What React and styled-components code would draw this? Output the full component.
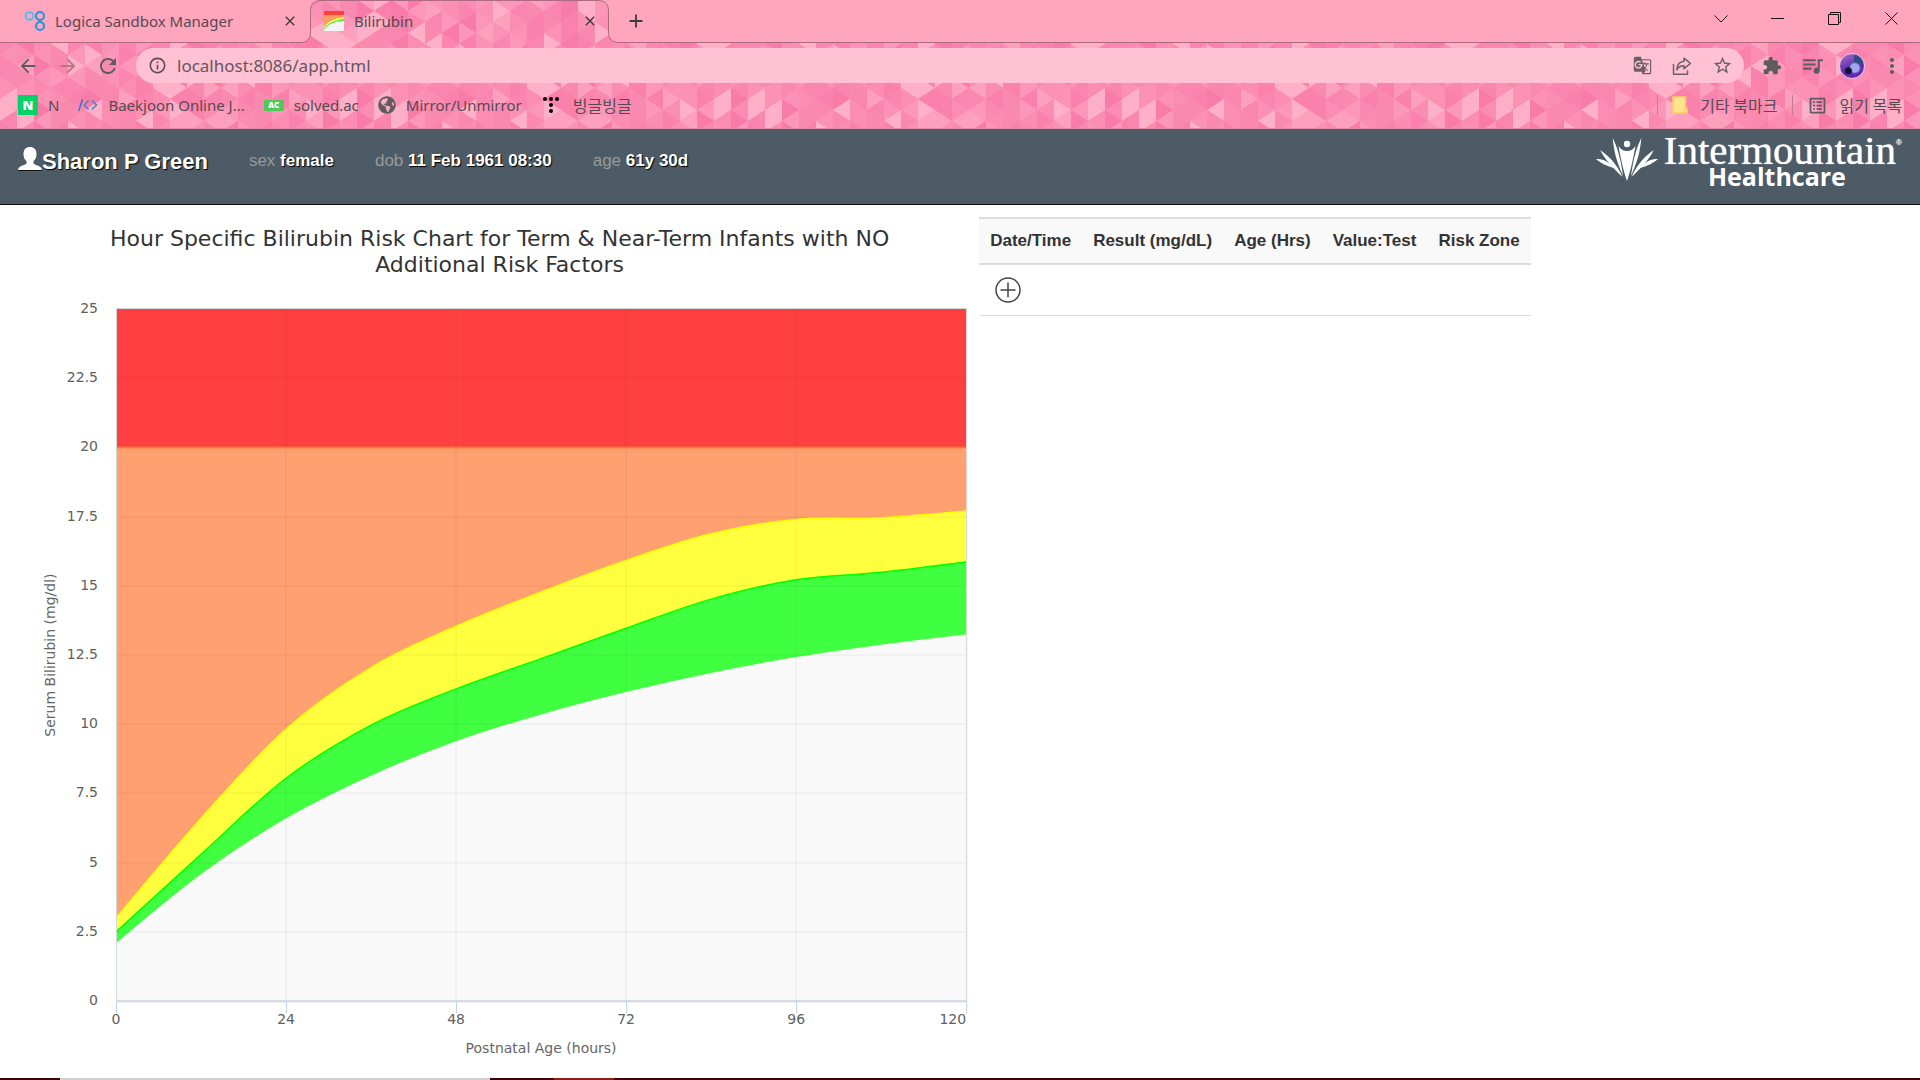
import React from "react";
import styled, { createGlobalStyle } from "styled-components";
import { FaGlobeAmericas } from "react-icons/fa";
import {
  MdAdd,
  MdArrowBack,
  MdArrowForward,
  MdClose,
  MdExtension,
  MdGTranslate,
  MdInfoOutline,
  MdListAlt,
  MdMoreVert,
  MdQueueMusic,
  MdRefresh,
  MdStarBorder,
} from "react-icons/md";

/* ---------- theme pattern ---------- */

const TILE_W = 374;
const TILE_H = 132;
const COL = 17;
const HALF = 11;

function buildTriangles() {
  const shades = ["#f97ba8", "#fa81ac", "#fa85ae", "#fa89b0", "#fb8db3", "#fb92b6", "#fc97b9", "#fca0bd", "#fdb0c7"];
  let seed = 41;
  const next = () => {
    seed = (seed * 1103515245 + 12345) % 2147483648;
    return seed / 2147483648;
  };
  const out = [];
  for (let c = 0; c < TILE_W / COL; c += 1) {
    for (let r = -1; r < TILE_H / HALF + 1; r += 1) {
      const x = c * COL;
      const y = r * HALF;
      const right = (c + r) % 2 === 0;
      const points = right
        ? `${x},${y - HALF} ${x + COL},${y} ${x},${y + HALF}`
        : `${x + COL},${y - HALF} ${x},${y} ${x + COL},${y + HALF}`;
      out.push({ points, fill: shades[Math.floor(next() * shades.length)] });
    }
  }
  return out;
}

const TRIANGLES = buildTriangles();
const TILE_SVG =
  `<svg xmlns="http://www.w3.org/2000/svg" width="${TILE_W}" height="${TILE_H}">` +
  `<rect width="${TILE_W}" height="${TILE_H}" fill="#fb8db3"/>` +
  TRIANGLES.map((t) => `<polygon points="${t.points}" fill="${t.fill}"/>`).join("") +
  `</svg>`;
const TILE_URL = `url("data:image/svg+xml,${encodeURIComponent(TILE_SVG)}")`;

/* ---------- base ---------- */

const UI_FONT = `"Noto Sans", "Noto Sans CJK KR", sans-serif`;
const KOREAN_FONT = `"Noto Sans CJK KR", sans-serif`;
const PAGE_FONT = `"Liberation Sans", Arial, sans-serif`;
const CHART_FONT = `"DejaVu Sans", sans-serif`;

const GlobalStyle = createGlobalStyle`
  * { box-sizing: border-box; }
  body { margin: 0; background: #fff; font-family: ${PAGE_FONT}; }
  button { padding: 0; border: 0; background: none; font: inherit; color: inherit; }
`;

const Screen = styled.div`
  display: flex;
  flex-direction: column;
  min-height: 100vh;
`;

/* ---------- browser ---------- */

const Chrome = styled.header`
  background: ${TILE_URL};
  border-bottom: 1px solid #e58aa8;
  font-family: ${UI_FONT};
  font-size: 15px;
  line-height: 20px;
  color: #574a51;
`;

const TabStrip = styled.div`
  display: flex;
  height: 43px;
  background: #ffa5be;
  border-bottom: 1px solid #ad6a80;
`;

const Tab = styled.div`
  position: relative;
  display: flex;
  align-items: center;
  width: ${(p) => (p.$first ? 310 : 300)}px;
  padding: 0 12px 0 ${(p) => (p.$first ? 25 : 14)}px;
`;

const TabLabel = styled.button`
  position: relative;
  display: flex;
  flex: 1;
  align-items: center;
  gap: 10px;
  height: 42px;
  white-space: nowrap;
`;

const TabShape = styled.svg`
  position: absolute;
  left: -10px;
  top: 0;
`;

const IconButton = styled.button`
  position: relative;
  display: flex;
  align-items: center;
  justify-content: center;
  width: ${(p) => p.$size || 40}px;
  height: ${(p) => p.$size || 35}px;
  color: ${(p) => p.$tone || "#5f5c60"};
`;

const NewTab = styled(IconButton)`
  margin-left: 6px;
  height: 42px;
`;

const WindowControls = styled.div`
  display: flex;
  margin-left: auto;
`;

const WindowButton = styled.button`
  display: flex;
  align-items: center;
  justify-content: center;
  width: 57px;
  height: 37px;
  color: #1c1015;
`;

const Toolbar = styled.div`
  display: flex;
  align-items: center;
  padding: 5px 8px;
`;

const AddressBar = styled.label`
  display: flex;
  flex: 1;
  align-items: center;
  gap: 10px;
  height: 35px;
  margin: 0 8px;
  padding: 0 2px 0 12px;
  border-radius: 18px;
  background: #ffc1d3;
  color: #5a4d53;
`;

const AddressInput = styled.input`
  flex: 1;
  border: 0;
  padding: 0;
  outline: 0;
  background: none;
  font: 17px ${UI_FONT};
  color: #65565d;
`;

const AddressTools = styled.span`
  display: flex;
`;

const Avatar = styled.span`
  width: 26px;
  height: 26px;
  border: 1px solid #efc4f3;
  border-radius: 50%;
  background:
    radial-gradient(circle at 35% 70%, #14103c 0 3px, transparent 4px),
    radial-gradient(circle at 62% 58%, #9fa8ea 0 4px, transparent 6px),
    linear-gradient(90deg, transparent 60%, #2f4a86 60%) top / 100% 40% no-repeat,
    linear-gradient(160deg, #b06bd0, #5a2fa8 55%, #6a22b8);
`;

const Bookmarks = styled.nav`
  display: flex;
  align-items: center;
  gap: 19px;
  height: 40px;
  padding: 0 18px 6px;
`;

const Bookmark = styled.a`
  display: flex;
  align-items: center;
  gap: 10px;
  color: inherit;
  text-decoration: none;
  white-space: nowrap;
`;

const KoreanBookmark = styled(Bookmark)`
  gap: 12px;
  font: 16px/20px ${KOREAN_FONT};
`;

const BookmarkEnd = styled.div`
  display: flex;
  align-items: center;
  gap: 14px;
  margin-left: auto;
`;

const Divider = styled.span`
  width: 1px;
  height: 20px;
  background: #c77a94;
`;

const SiteBadge = styled.span`
  display: flex;
  align-items: center;
  justify-content: center;
  width: 20px;
  height: ${(p) => p.$height}px;
  border-radius: ${(p) => p.$radius}px;
  background: ${(p) => p.$fill};
  color: #fff;
  font-weight: 900;
  font-size: ${(p) => p.$text}px;
  line-height: 1;
`;

/* ---------- patient banner ---------- */

const Banner = styled.section`
  display: flex;
  align-items: flex-start;
  justify-content: space-between;
  height: 76px;
  padding: 0 18px;
  border-bottom: 1px solid #0b0d0f;
  background: #4d5b66;
  color: #fff;
`;

const Patient = styled.div`
  display: flex;
  align-items: flex-start;
  gap: 41px;
  padding-top: 18px;
  font-size: 17px;
  line-height: 28px;
`;

const PatientName = styled.h1`
  display: flex;
  align-items: flex-start;
  margin: 0;
  font-size: 22px;
  line-height: 30px;
  text-shadow: 1px 1px 1px #000;
`;

const Fact = styled.span`
  color: #999;
`;

const FactValue = styled.b`
  color: #fff;
  text-shadow: 1px 1px 1px #000;
`;

const Logo = styled.div`
  display: flex;
  align-items: flex-start;
  gap: 6px;
  padding-top: 6px;
`;

const LogoText = styled.div`
  display: flex;
  flex-direction: column;
  align-items: center;
`;

const LogoName = styled.span`
  display: flex;
  font: 41px/30px "Liberation Serif", serif;
  text-shadow: 0 0 1px #fff;
`;

const LogoMark = styled.sup`
  font: 8px/16px "Liberation Sans", sans-serif;
`;

const LogoSub = styled.span`
  padding-right: 12px;
  font: 700 25px/22px "Open Sans", sans-serif;
`;

/* ---------- content ---------- */

const Content = styled.main`
  display: flex;
  flex: 1;
  align-items: flex-start;
`;

const ChartPanel = styled.section`
  width: 51%;
  padding-top: 21px;
`;

const ChartTitle = styled.h2`
  margin: 0;
  padding: 0 0 12px 20px;
  font: 400 22px/26px ${CHART_FONT};
  color: #333;
  text-align: center;
`;

const ChartSvg = styled.svg`
  display: block;
  width: 100%;
  font-family: ${CHART_FONT};
  font-size: 14px;
`;

const Results = styled.table`
  margin-top: 12px;
  border-collapse: collapse;
  color: #333;
  font-size: 17px;
`;

const HeadCell = styled.th`
  height: 46px;
  padding: 0 11px;
  border-top: 2px solid #ddd;
  border-bottom: 2px solid #ddd;
  background: #f9f9f9;
  white-space: nowrap;
  text-align: left;
`;

const BodyCell = styled.td`
  height: 51px;
  padding: 0 9px;
  border-bottom: 1px solid #ddd;
`;

/* ---------- taskbar edge ---------- */

const Taskbar = styled.footer`
  display: flex;
  height: 2px;
  padding-left: 60px;
  background: #3d0306;
`;

const TaskSegment = styled.span`
  width: ${(p) => p.$width}px;
  margin-right: 64px;
  background: ${(p) => p.$fill};
`;

/* ---------- drawings ---------- */

function LogicaIcon() {
  return (
    <svg width="20" height="20" viewBox="0 0 20 20" fill="none" strokeWidth="2">
      <circle cx="4.6" cy="5" r="3.8" stroke="#4fc1ee" />
      <circle cx="15" cy="5" r="4" stroke="#1b95dc" />
      <circle cx="15" cy="15" r="4" stroke="#1b95dc" />
    </svg>
  );
}

function BilirubinIcon() {
  return (
    <svg width="20" height="20" viewBox="0 0 20 20">
      <rect width="20" height="20" fill="#f4f4f4" />
      <rect width="20" height="5" fill="#ff4038" />
      <path d="M0 4h20v3C11 7 5 10 0 16z" fill="#ff9c68" />
      <path d="M0 16C5 10 11 7 20 6v2C11 9 5 12 0 17z" fill="#fff53c" />
      <path d="M0 17C5 12 11 9 20 8v2C11 10 5 13 0 18z" fill="#40f040" />
    </svg>
  );
}

function ActiveTabShape() {
  const d = "M0 42.5C7 42.5 10.5 39 10.5 32V11C10.5 4 14 .5 21 .5H298C305 .5 308.500 4 308.500 11V32C308.500 39 312 42.500 320 42.500";
  return (
    <TabShape width="320" height="43" viewBox="0 0 320 43" aria-hidden="true">
      <defs>
        <pattern id="tab-tile" width={TILE_W} height={TILE_H} x="-300" patternUnits="userSpaceOnUse">
          <rect width={TILE_W} height={TILE_H} fill="#fb8db3" />
          {TRIANGLES.map((t, i) => (
            <polygon key={i} points={t.points} fill={t.fill} />
          ))}
        </pattern>
      </defs>
      <path d={`${d}V43H0z`} fill="url(#tab-tile)" />
      <path d={d} fill="none" stroke="#ad6a80" />
    </TabShape>
  );
}

function ShareIcon() {
  return (
    <svg width="20" height="20" viewBox="0 0 20 20" fill="none" stroke="#6b5f66" strokeWidth="1.5" strokeLinejoin="round">
      <path d="M1.500 8V18.200H15.500V14.500" />
      <path d="M12 2.200 18.500 7.500 12 12.700V9.800C8.500 9.800 6.300 11.200 4.800 13.800 5 9.400 7.500 5.700 12 5.200z" />
    </svg>
  );
}

function CodeIcon() {
  return (
    <svg width="20" height="20" viewBox="0 0 20 20" fill="none" strokeWidth="1.500">
      <path d="M.8 16 4.500 4" stroke="#3b74c4" />
      <path d="M10.500 5.500 6.300 10l4.200 4.500" stroke="#3b8ad0" />
      <path d="M14 5.500l4.500 4.500-4.500 4.500" stroke="#4b7fd0" />
    </svg>
  );
}

function DotsIcon() {
  const dots = [[4, 4], [10, 4], [16, 4], [10, 10], [10, 16]];
  return (
    <svg width="20" height="20" viewBox="0 0 20 20" fill="#000">
      {dots.map(([x, y]) => (
        <circle key={`${x}-${y}`} cx={x} cy={y} r="2" />
      ))}
    </svg>
  );
}

function FolderIcon() {
  return (
    <svg width="16" height="18" viewBox="0 0 16 18">
      <path d="M1 1h12.500v11.500H15V17H1z" fill="#ffe48c" stroke="#f8cf55" strokeWidth="1.500" />
      <path d="M12 17v-4h3v4z" fill="#ffe48c" stroke="#f8cf55" />
    </svg>
  );
}

function PersonIcon() {
  return (
    <svg width="24" height="24" viewBox="0 0 24 24" fill="#fff">
      <path d="M12 0c4 0 6.500 2.600 6.500 7 0 3-1 5.600-3 7.300v2c0 1 4.500 2.200 6.500 3.500 1.200.8 2 2 2 3.500H0c0-1.500.8-2.700 2-3.500 2-1.300 6.500-2.500 6.500-3.500v-2c-2-1.700-3-4.300-3-7.300C5.500 2.600 8 0 12 0z" />
      <path d="M0 23.500h24" stroke="#111" />
    </svg>
  );
}

function LogoFigure() {
  return (
    <svg width="62" height="46" viewBox="0 0 62 46" fill="#fff">
      <circle cx="31" cy="9" r="3.200" />
      <path d="M31 46C28 37 26 30 22.500 11c2 3 4.500 5 8.500 5s6.500-2 8.500-5C36 30 34 37 31 46z" />
      <path d="M27 41C21 27 18 18 16.700 3c4 8 8 20 10.300 38z" />
      <path d="M35 41C41 27 44 18 45.300 3c-4 8-8 20-10.300 38z" />
      <path d="M26.500 42C16 32 10 26 4.200 15 11 20 20 27 26.500 42z" />
      <path d="M35.500 42C46 32 52 26 57.800 15 51 20 42 27 35.500 42z" />
      <path d="M18 33C11 31 6 29 0 24c6 0 11 1 18 9z" />
      <path d="M44 33C51 31 56 29 62 24c-6 0-11 1-18 9z" />
    </svg>
  );
}

/* ---------- chart ---------- */

const LEFT = 116;
const RIGHT = 966;
const TOP = 19;
const BOTTOM = 711;

// Bilirubin limits (mg/dl) of each zone, one value for every 12 hours of age.
const STEP = 12;
const HIGH = [3, 6.6, 9.83, 12.05, 13.54, 14.78, 15.92, 16.88, 17.4, 17.46, 17.7];
const MIDDLE = [2.5, 5.3, 8.05, 9.97, 11.28, 12.37, 13.47, 14.52, 15.22, 15.49, 15.86];
const LOW = [2.05, 4.55, 6.57, 8.12, 9.36, 10.33, 11.14, 11.83, 12.4, 12.85, 13.22];

const px = (hour) => LEFT + (hour / 120) * (RIGHT - LEFT);
const py = (value) => BOTTOM - (value / 25) * (BOTTOM - TOP);

// Cubic spline through the data, with slopes taken from the neighbouring points.
function curve(data) {
  const xs = data.map((_, i) => px(i * STEP));
  const ys = data.map(py);
  const w = xs[1] - xs[0];
  const last = ys.length - 1;
  const slope = ys.map((_, i) => (i > 0 && i < last ? (ys[i + 1] - ys[i - 1]) / (2 * w) : 0));
  slope[0] = (3 * (ys[1] - ys[0])) / w / 2 - slope[1] / 2;
  slope[last] = (3 * (ys[last] - ys[last - 1])) / w / 2 - slope[last - 1] / 2;
  const t = w / 3;
  let d = `M${xs[0]} ${ys[0]}`;
  for (let i = 1; i <= last; i += 1) {
    d += `C${xs[i - 1] + t} ${ys[i - 1] + slope[i - 1] * t} ${xs[i] - t} ${ys[i] - slope[i] * t} ${xs[i]} ${ys[i]}`;
  }
  return d;
}

const Y_TICKS = [0, 2.5, 5, 7.5, 10, 12.5, 15, 17.5, 20, 22.5, 25];
const X_TICKS = [0, 24, 48, 72, 96, 120];

function RiskChart() {
  const zones = [
    { data: HIGH, fill: "#ffff40", line: "#ffff00" },
    { data: MIDDLE, fill: "#40ff40", line: "#00ff00" },
    { data: LOW, fill: "#f9f9f9", line: "#f9f9f9" },
  ];
  return (
    <ChartSvg viewBox="0 0 979 780" role="img" aria-label="Bilirubin risk zones by postnatal age">
      <rect x={LEFT} y={TOP} width={RIGHT - LEFT} height={BOTTOM - TOP} fill="#ff4040" />
      <rect x={LEFT} y={py(20)} width={RIGHT - LEFT} height={BOTTOM - py(20)} fill="#ffa070" />
      <path d={`M${LEFT} ${py(20)}H${RIGHT}`} stroke="#ff7f3f" strokeWidth="2" />
      {zones.map((z) => (
        <g key={z.fill}>
          <path d={`${curve(z.data)}V${BOTTOM}H${LEFT}z`} fill={z.fill} />
          <path d={curve(z.data)} fill="none" stroke={z.line} strokeWidth="1.500" />
        </g>
      ))}
      <g stroke="#000" strokeOpacity="0.03" strokeWidth="2">
        {Y_TICKS.slice(1, -1).map((v) => (
          <path key={v} d={`M${LEFT} ${Math.round(py(v))}H${RIGHT}`} />
        ))}
        {X_TICKS.slice(1, -1).map((h) => (
          <path key={h} d={`M${Math.round(px(h))} ${TOP}V${BOTTOM}`} />
        ))}
      </g>
      <path d={`M${LEFT} ${TOP - 0.5}H${RIGHT + 0.5}V${BOTTOM}M${LEFT + 0.5} ${TOP}V${BOTTOM}`} fill="none" stroke="#d4d9dd" />
      <path d={`M${LEFT} ${BOTTOM}H${RIGHT + 1}`} stroke="#ccd6e4" strokeWidth="2" />
      <g stroke="#c0d0e0" strokeWidth="1">
        {X_TICKS.map((h) => (
          <path key={h} d={`M${Math.round(px(h)) + 0.5} ${BOTTOM}v12`} />
        ))}
      </g>
      <g fill="#606060" textAnchor="end">
        {Y_TICKS.map((v) => (
          <text key={v} x="98" y={Math.round(py(v)) + 4}>{v}</text>
        ))}
      </g>
      <g fill="#606060">
        {X_TICKS.map((h) => (
          <text key={h} x={px(h)} y="734" textAnchor={h === 120 ? "end" : "middle"}>{h}</text>
        ))}
      </g>
      <g fill="#666" textAnchor="middle">
        <text x={(LEFT + RIGHT) / 2} y="763">Postnatal Age (hours)</text>
        <text transform={`translate(55 ${(TOP + BOTTOM) / 2}) rotate(-90)`}>Serum Bilirubin (mg/dl)</text>
      </g>
    </ChartSvg>
  );
}

const COLUMNS = ["Date/Time", "Result (mg/dL)", "Age (Hrs)", "Value:Test", "Risk Zone"];

export default function App() {
  return (
    <Screen>
      <GlobalStyle />
      <Chrome>
        <TabStrip>
          <Tab $first>
            <TabLabel type="button"><LogicaIcon />Logica Sandbox Manager</TabLabel>
            <IconButton $size={16} $tone="#3f3a3d" aria-label="Close tab"><MdClose size={16} /></IconButton>
          </Tab>
          <Tab>
            <ActiveTabShape />
            <TabLabel type="button"><BilirubinIcon />Bilirubin</TabLabel>
            <IconButton $size={16} $tone="#3f3a3d" aria-label="Close tab"><MdClose size={16} /></IconButton>
          </Tab>
          <NewTab $tone="#3f3a3d" aria-label="New tab"><MdAdd size={22} /></NewTab>
          <WindowControls>
            <WindowButton aria-label="Search tabs">
              <svg width="14" height="8" viewBox="0 0 14 8" fill="none" stroke="currentColor"><path d="M.5.5 7 7 13.500.5" /></svg>
            </WindowButton>
            <WindowButton aria-label="Minimize">
              <svg width="13" height="1" viewBox="0 0 13 1"><path d="M0 .5H13" stroke="currentColor" /></svg>
            </WindowButton>
            <WindowButton aria-label="Restore">
              <svg width="13" height="13" viewBox="0 0 13 13" fill="none" stroke="currentColor"><path d="M.5 2.500h10v10H.5zM2.500 2.500v-2h10v10h-2" /></svg>
            </WindowButton>
            <WindowButton aria-label="Close">
              <svg width="13" height="13" viewBox="0 0 13 13" stroke="currentColor"><path d="M.5.5l12 12M12.500.5l-12 12" /></svg>
            </WindowButton>
          </WindowControls>
        </TabStrip>
        <Toolbar>
          <IconButton aria-label="Back"><MdArrowBack size={22} /></IconButton>
          <IconButton $tone="#b97288" aria-label="Forward"><MdArrowForward size={22} /></IconButton>
          <IconButton aria-label="Reload"><MdRefresh size={24} /></IconButton>
          <AddressBar>
            <MdInfoOutline size={19} />
            <AddressInput aria-label="Address" defaultValue="localhost:8086/app.html" />
            <AddressTools>
              <IconButton $tone="#6b5f66" aria-label="Translate"><MdGTranslate size={19} /></IconButton>
              <IconButton aria-label="Share"><ShareIcon /></IconButton>
              <IconButton $tone="#6b5f66" aria-label="Bookmark"><MdStarBorder size={21} /></IconButton>
            </AddressTools>
          </AddressBar>
          <IconButton aria-label="Extensions"><MdExtension size={20} /></IconButton>
          <IconButton aria-label="Media"><MdQueueMusic size={25} /></IconButton>
          <IconButton aria-label="Profile"><Avatar /></IconButton>
          <IconButton aria-label="Menu"><MdMoreVert size={24} /></IconButton>
        </Toolbar>
        <Bookmarks>
          <Bookmark href="#n"><SiteBadge $height={20} $radius={0} $fill="#05d169" $text={13}>N</SiteBadge>N</Bookmark>
          <Bookmark href="#boj"><CodeIcon />Baekjoon Online J...</Bookmark>
          <Bookmark href="#solved"><SiteBadge $height={11} $radius={1} $fill="#4fc95a" $text={8}>AC</SiteBadge>solved.ac</Bookmark>
          <Bookmark href="#mirror"><FaGlobeAmericas size={18} color="#5f5c60" />Mirror/Unmirror</Bookmark>
          <KoreanBookmark href="#spin"><DotsIcon />빙글빙글</KoreanBookmark>
          <BookmarkEnd>
            <Divider />
            <KoreanBookmark href="#other"><FolderIcon />기타 북마크</KoreanBookmark>
            <Divider />
            <KoreanBookmark href="#reading"><MdListAlt size={21} color="#5f5c60" />읽기 목록</KoreanBookmark>
          </BookmarkEnd>
        </Bookmarks>
      </Chrome>

      <Banner>
        <Patient>
          <PatientName><PersonIcon />Sharon P Green</PatientName>
          <Fact>sex <FactValue>female</FactValue></Fact>
          <Fact>dob <FactValue>11 Feb 1961 08:30</FactValue></Fact>
          <Fact>age <FactValue>61y 30d</FactValue></Fact>
        </Patient>
        <Logo>
          <LogoFigure />
          <LogoText>
            <LogoName>Intermountain<LogoMark>®</LogoMark></LogoName>
            <LogoSub>Healthcare</LogoSub>
          </LogoText>
        </Logo>
      </Banner>

      <Content>
        <ChartPanel>
          <ChartTitle>
            Hour Specific Bilirubin Risk Chart for Term &amp; Near-Term Infants with NO
            <br />
            Additional Risk Factors
          </ChartTitle>
          <RiskChart />
        </ChartPanel>
        <Results>
          <thead>
            <tr>{COLUMNS.map((c) => <HeadCell key={c} scope="col">{c}</HeadCell>)}</tr>
          </thead>
          <tbody>
            <tr>
              <BodyCell colSpan={COLUMNS.length}>
                <IconButton $tone="#444" aria-label="Add result">
                  <svg width="26" height="26" viewBox="0 0 26 26" fill="none" stroke="currentColor" strokeWidth="1.500">
                    <circle cx="13" cy="13" r="12" />
                    <path d="M13 5.500v15M5.500 13h15" />
                  </svg>
                </IconButton>
              </BodyCell>
            </tr>
          </tbody>
        </Results>
      </Content>

      <Taskbar>
        <TaskSegment $width={430} $fill="#d0d0d0" />
        <TaskSegment $width={60} $fill="#8a2018" />
      </Taskbar>
    </Screen>
  );
}
